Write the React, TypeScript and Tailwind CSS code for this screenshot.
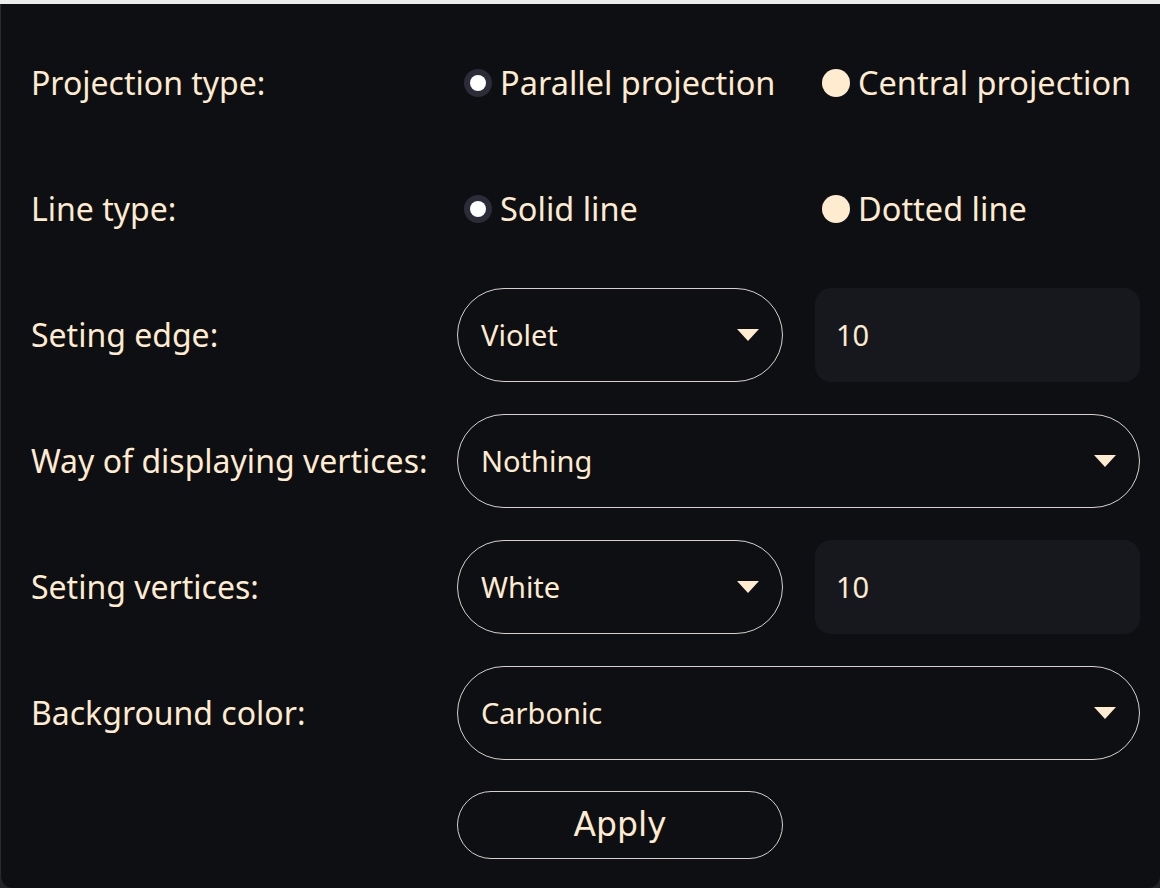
import React, { useState } from "react";

const font = { fontFamily: '"Noto Sans", "Open Sans", sans-serif' };

function Radio({ checked, label, onClick }: { checked: boolean; label: string; onClick: () => void }) {
  return (
    <button onClick={onClick} className="ml-[7px] flex items-center gap-[8px] text-[32.5px] text-[#feebd0]">
      {checked ? (
        <span className="flex h-[28px] w-[28px] shrink-0 items-center justify-center rounded-full bg-[#2b2c38]">
          <span className="h-[16px] w-[16px] rounded-full bg-white" />
        </span>
      ) : (
        <span className="h-[28px] w-[28px] shrink-0 rounded-full bg-[#feebd0]" />
      )}
      <span className="whitespace-nowrap leading-none">{label}</span>
    </button>
  );
}

function Select({ value, wide }: { value: string; wide?: boolean }) {
  return (
    <div
      className={
        "flex h-[94px] items-center justify-between rounded-full border-[1.5px] border-[#d6d1ca] pl-[23px] pr-[22px] text-[29px] text-[#feebd0] " +
        (wide ? "w-[683px]" : "w-[326px]")
      }
    >
      <span>{value}</span>
      <svg width="24" height="14" viewBox="0 0 24 14">
        <path d="M1 1 L23 1 L12 13 Z" fill="#feebd0" />
      </svg>
    </div>
  );
}

function NumberBox({ value }: { value: string }) {
  return (
    <div className="flex h-[94px] w-[325px] items-center rounded-[16px] bg-[#17181d] pl-[21px] text-[29px] text-[#feebd0]">
      {value}
    </div>
  );
}

function Row({ label, children }: { label: string; children: React.ReactNode }) {
  return (
    <div className="flex h-[94px] items-center">
      <div className="w-[426px] whitespace-nowrap text-[32px] text-[#feebd0]">{label}</div>
      {children}
    </div>
  );
}

export default function App() {
  const [proj, setProj] = useState("parallel");
  const [line, setLine] = useState("solid");

  return (
    <div className="flex h-[888px] w-[1160px] flex-col bg-[#232428]" style={font}>
      <div className="h-[4px] bg-[#ececec]" />
      <div className="flex flex-1 flex-col gap-[32px] rounded-b-[12px] border-l border-[#2a2b30] bg-[#0e0f13] pl-[30px] pt-[32px]">
        <Row label="Projection type:">
          <div className="grid grid-cols-[326px_325px] gap-[32px]">
            <Radio checked={proj === "parallel"} label="Parallel projection" onClick={() => setProj("parallel")} />
            <Radio checked={proj === "central"} label="Central projection" onClick={() => setProj("central")} />
          </div>
        </Row>
        <Row label="Line type:">
          <div className="grid grid-cols-[326px_325px] gap-[32px]">
            <Radio checked={line === "solid"} label="Solid line" onClick={() => setLine("solid")} />
            <Radio checked={line === "dotted"} label="Dotted line" onClick={() => setLine("dotted")} />
          </div>
        </Row>
        <Row label="Seting edge:">
          <div className="flex gap-[32px]">
            <Select value="Violet" />
            <NumberBox value="10" />
          </div>
        </Row>
        <Row label="Way of displaying vertices:">
          <Select value="Nothing" wide />
        </Row>
        <Row label="Seting vertices:">
          <div className="flex gap-[32px]">
            <Select value="White" />
            <NumberBox value="10" />
          </div>
        </Row>
        <Row label="Background color:">
          <Select value="Carbonic" wide />
        </Row>
        <div className="-mt-[1px] flex">
          <div className="w-[426px]" />
          <button
            className="flex h-[68px] w-[326px] items-center justify-center rounded-full border-[1.5px] border-[#d6d1ca] text-[33px] text-[#feebd0]"
            style={{ fontFamily: '"DejaVu Sans", "Noto Sans", sans-serif' }}
          >
            Apply
          </button>
        </div>
      </div>
    </div>
  );
}
